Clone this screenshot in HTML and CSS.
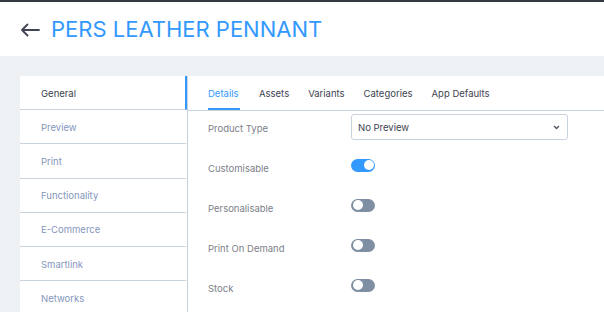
FILE: index.html
```
<!DOCTYPE html>
<html>
<head>
<meta charset="utf-8">
<link rel="stylesheet" href="styles.css">
</head>
<body>
<div class="topbar"></div>
<header class="header">
  <svg class="back" width="20" height="14" viewBox="0 0 20 14"><path d="M19 7H2M7.5 1.5L2 7l5.5 5.5" fill="none" stroke="#3e4451" stroke-width="1.8" stroke-linecap="round" stroke-linejoin="round"/></svg>
  <h1 class="title">PERS LEATHER PENNANT</h1>
</header>
<main class="content">
  <nav class="sidebar">
    <div class="side-item active">General</div>
    <div class="side-item">Preview</div>
    <div class="side-item">Print</div>
    <div class="side-item">Functionality</div>
    <div class="side-item">E-Commerce</div>
    <div class="side-item">Smartlink</div>
    <div class="side-item">Networks</div>
  </nav>
  <section class="panel">
    <div class="tabs">
      <div class="tab active">Details</div>
      <div class="tab">Assets</div>
      <div class="tab">Variants</div>
      <div class="tab">Categories</div>
      <div class="tab">App Defaults</div>
    </div>
    <div class="form">
      <div class="row first">
        <div class="label">Product Type</div>
        <div class="select">No Preview
          <svg class="chev" width="7" height="5" viewBox="0 0 7 5"><path d="M1 1l2.5 2.5L6 1" fill="none" stroke="#495057" stroke-width="1.3"/></svg>
        </div>
      </div>
      <div class="row"><div class="label">Customisable</div><div class="toggle on"></div></div>
      <div class="row"><div class="label">Personalisable</div><div class="toggle"></div></div>
      <div class="row"><div class="label">Print On Demand</div><div class="toggle"></div></div>
      <div class="row"><div class="label">Stock</div><div class="toggle"></div></div>
    </div>
  </section>
</main>
</body>
</html>
```
FILE: styles.css
```
* { box-sizing: border-box; }
html, body { margin: 0; padding: 0; }
body {
  font-family: Inter, "Noto Sans", sans-serif;
  background: #eef1f4;
  width: 604px;
  height: 312px;
  overflow: hidden;
}
.topbar { height: 2px; background: #343a40; }
.header {
  height: 54px;
  background: #fff;
  display: flex;
  align-items: center;
  padding-left: 20px;
  gap: 11px;
}
.back { display: block; margin-top: 1px; }
.title {
  margin: 0;
  font-size: 22px;
  font-weight: 400;
  color: #3399ff;
  letter-spacing: 0;
}
.content {
  display: flex;
  padding: 20px 0 0 20px;
}
.sidebar {
  width: 167px;
  background: #fff;
  flex: none;
}
.side-item {
  height: 34.2px;
  display: flex;
  align-items: center;
  padding-left: 21px;
  padding-top: 1px;
  font-size: 9.5px;
  color: #8496bd;
  border-bottom: 1px solid #c9d3df;
  border-right: 2px solid transparent;
}
.side-item.active {
  color: #3a3f4a;
  border-right-color: #3399ff;
}
.panel {
  flex: 1;
  background: #fff;
  border-left: 1px solid #c9d3df;
  height: 240px;
}
.tabs {
  display: flex;
  height: 35px;
  padding-left: 20px;
  gap: 19px;
  border-bottom: 1px solid #c9d3df;
}
.tab {
  font-size: 9.5px;
  color: #3d4350;
  display: flex;
  align-items: center;
  height: 34px;
  padding-top: 1px;
}
.tab.active {
  color: #3399ff;
  border-bottom: 2px solid #3399ff;
  padding: 3px 1px 0 0;
  min-width: 32px;
}
.form { padding: 3px 0 0 20px; }
.row {
  display: flex;
  align-items: center;
  height: 40px;
}
.row.first { height: 26px; margin-bottom: 7px; }
.label {
  width: 143px;
  font-size: 9.5px;
  color: #7c8089;
  padding-top: 2px;
}
.select {
  width: 217px;
  height: 26px;
  border: 1px solid #c9d3df;
  border-radius: 3px;
  display: flex;
  align-items: center;
  justify-content: space-between;
  padding: 0 7px 0 6px;
  font-size: 9.5px;
  color: #3d4350;
}
.chev { display: block; }
.toggle {
  position: relative;
  width: 24px;
  height: 13px;
  border-radius: 7px;
  background: #7e8ea3;
  margin-top: -4px;
}
.toggle::after {
  content: "";
  position: absolute;
  top: 1.5px;
  left: 1.5px;
  width: 10px;
  height: 10px;
  border-radius: 50%;
  background: #fff;
}
.toggle.on { background: #3399ff; }
.toggle.on::after { left: 12.5px; }
```
